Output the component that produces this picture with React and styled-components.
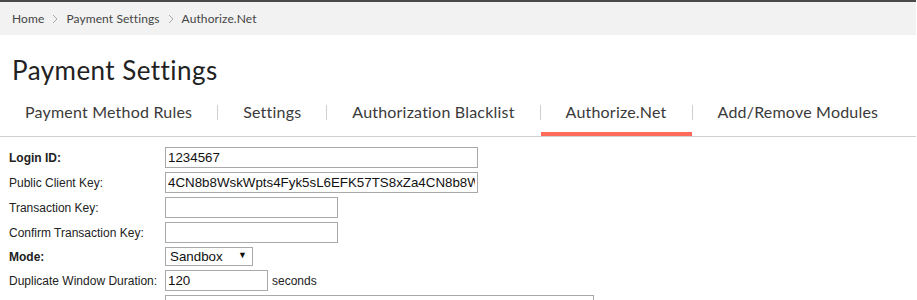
import React from 'react';
import styled, { createGlobalStyle } from 'styled-components';

const GlobalStyle = createGlobalStyle`
  html, body {
    margin: 0;
    padding: 0;
    background: #fff;
  }
  body {
    font-family: 'Lato', 'Open Sans', sans-serif;
    color: #222;
  }
`;

// Estructura principal
const Page = styled.div`
  border-top: 2px solid #4a4a4a;
  width: 916px;
  overflow: hidden;
`;

const Breadcrumb = styled.nav`
  display: flex;
  align-items: center;
  gap: 8px;
  height: 33px;
  padding: 0 12px;
  background: #f2f2f2;
  font-size: 12px;
  color: #444;
`;

const Crumb = styled.span`
  color: #444;
  letter-spacing: 0.1px;
`;

const Chevron = () => (
  <svg width="6" height="10" viewBox="0 0 6 10" aria-hidden="true">
    <polyline points="1,1 5,5 1,9" fill="none" stroke="#a8a8a8" strokeWidth="1" />
  </svg>
);

const Title = styled.h1`
  margin: 18px 0 0;
  padding: 0 12px;
  font-size: 26px;
  font-weight: 400;
  letter-spacing: 0.45px;
  color: #222;
  line-height: 34px;
`;

const Tabs = styled.div`
  display: flex;
  align-items: center;
  margin-top: 6px;
  border-bottom: 1px solid #cfcfcf;
`;

const Tab = styled.a`
  display: block;
  padding: 9px 25px 11px;
  font-size: 16px;
  letter-spacing: 0.2px;
  color: #3a3a3a;
  text-decoration: none;
  white-space: nowrap;
  border-bottom: 4px solid ${(p) => (p.$active ? '#ff6a5a' : 'transparent')};
`;

const Divider = styled.span`
  width: 1px;
  height: 15px;
  background: #cfcfcf;
  margin-bottom: 4px;
`;

// Formulario
const Form = styled.div`
  display: grid;
  grid-template-columns: 156px auto;
  row-gap: 4px;
  align-items: center;
  padding: 10px 0 0 9px;
  font-family: 'Liberation Sans', Arial, sans-serif;
  font-size: 12px;
  color: #222;
`;

const Label = styled.label`
  font-weight: ${(p) => (p.$bold ? 700 : 400)};
  white-space: nowrap;
`;

const Field = styled.div`
  display: flex;
  align-items: center;
  gap: 4px;
`;

const Input = styled.input`
  box-sizing: border-box;
  width: ${(p) => p.$w}px;
  height: 21px;
  margin: 0;
  padding: 1px 2px;
  border: 1px solid #a9a9a9;
  font-family: 'Liberation Sans', Arial, sans-serif;
  font-size: 13.33px;
  color: #111;
  background: #fff;
  outline: none;
`;

const SelectWrap = styled.span`
  position: relative;
  display: inline-block;
`;

const Select = styled.select`
  box-sizing: border-box;
  width: 88px;
  height: 19px;
  margin: 0;
  padding: 0 0 0 4px;
  border: 1px solid #a9a9a9;
  border-radius: 0;
  appearance: none;
  background: #fff;
  font-family: 'Liberation Sans', Arial, sans-serif;
  font-size: 13.33px;
  color: #111;
  outline: none;
`;

const Arrow = styled.span`
  position: absolute;
  right: 6px;
  top: 3px;
  font-size: 9px;
  color: #111;
  pointer-events: none;
`;

const Unit = styled.span`
  font-size: 12px;
  color: #222;
`;

const tabs = [
  'Payment Method Rules',
  'Settings',
  'Authorization Blacklist',
  'Authorize.Net',
  'Add/Remove Modules',
];

const App = () => {
  return (
    <Page>
      <GlobalStyle />
      <Breadcrumb>
        <Crumb>Home</Crumb>
        <Chevron />
        <Crumb>Payment Settings</Crumb>
        <Chevron />
        <Crumb>Authorize.Net</Crumb>
      </Breadcrumb>
      <Title>Payment Settings</Title>
      <Tabs>
        {tabs.map((t, i) => (
          <React.Fragment key={t}>
            {i > 0 && <Divider />}
            <Tab href="#" $active={t === 'Authorize.Net'}>{t}</Tab>
          </React.Fragment>
        ))}
      </Tabs>
      <Form>
        <Label $bold>Login ID:</Label>
        <Field><Input $w={313} defaultValue="1234567" /></Field>

        <Label>Public Client Key:</Label>
        <Field><Input $w={313} defaultValue="4CN8b8WskWpts4Fyk5sL6EFK57TS8xZa4CN8b8WskWpts4Fyk5sL6EFK57TS8xZa" /></Field>

        <Label>Transaction Key:</Label>
        <Field><Input $w={173} type="text" /></Field>

        <Label>Confirm Transaction Key:</Label>
        <Field><Input $w={173} type="text" /></Field>

        <Label $bold>Mode:</Label>
        <Field>
          <SelectWrap>
            <Select defaultValue="sandbox">
              <option value="sandbox">Sandbox</option>
              <option value="live">Live</option>
            </Select>
            <Arrow>▼</Arrow>
          </SelectWrap>
        </Field>

        <Label>Duplicate Window Duration:</Label>
        <Field>
          <Input $w={103} defaultValue="120" />
          <Unit>seconds</Unit>
        </Field>

        <Label>CVV2 Message:</Label>
        <Field><Input $w={429} type="text" /></Field>
      </Form>
    </Page>
  );
};

export default App;
